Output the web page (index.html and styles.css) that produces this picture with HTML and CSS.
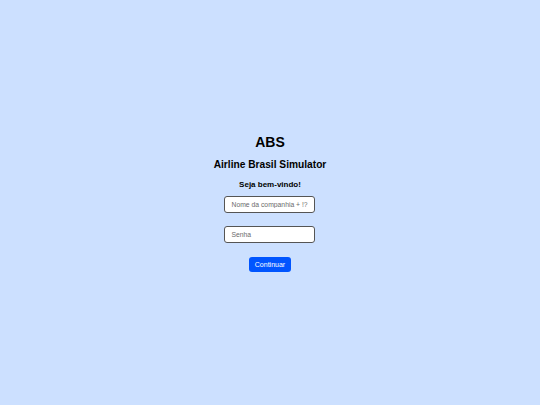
FILE: index.html
```html
<!DOCTYPE html>
<html lang="pt-BR">
<head>
<meta charset="utf-8">
<title>ABS</title>
<link rel="stylesheet" href="styles.css">
</head>
<body>
<main class="page">
  <div class="login">
    <h1 class="brand">ABS</h1>
    <h2 class="subtitle">Airline Brasil Simulator</h2>
    <p class="welcome">Seja bem-vindo!</p>
    <input class="field" type="text" placeholder="Nome da companhia + !?">
    <input class="field" type="password" placeholder="Senha">
    <button class="btn" type="button">Continuar</button>
  </div>
</main>
</body>
</html>
```

FILE: styles.css
```css
html, body {
  margin: 0;
  padding: 0;
  height: 100%;
}
body {
  background: #cce0ff;
  font-family: "Liberation Sans", Arial, sans-serif;
  color: #000;
}
.page {
  height: 100%;
  display: flex;
  align-items: center;
  justify-content: center;
}
.login {
  display: flex;
  flex-direction: column;
  align-items: center;
  margin-top: -1px;
}
.brand {
  margin: 0;
  font-size: 14px;
  line-height: 18px;
  font-weight: bold;
}
.subtitle {
  margin: 7px 0 0;
  font-size: 10.2px;
  line-height: 14px;
  font-weight: bold;
}
.welcome {
  margin: 7px 0 0;
  font-size: 8px;
  line-height: 12px;
  font-weight: bold;
}
.field {
  box-sizing: border-box;
  width: 91px;
  height: 17px;
  margin-top: 5px;
  padding: 0 6px;
  border: 1px solid #555;
  border-radius: 3px;
  background: #fff;
  font-family: "Liberation Sans", Arial, sans-serif;
  font-size: 6.8px;
  outline: none;
}
.field + .field {
  margin-top: 13px;
}
.field::placeholder {
  color: #6b6b6b;
}
.btn {
  box-sizing: border-box;
  margin-top: 14px;
  width: 42px;
  height: 15px;
  padding: 0;
  border: none;
  border-radius: 3px;
  background: #0055ff;
  color: #fff;
  font-family: "Liberation Sans", Arial, sans-serif;
  font-size: 7px;
}
```
